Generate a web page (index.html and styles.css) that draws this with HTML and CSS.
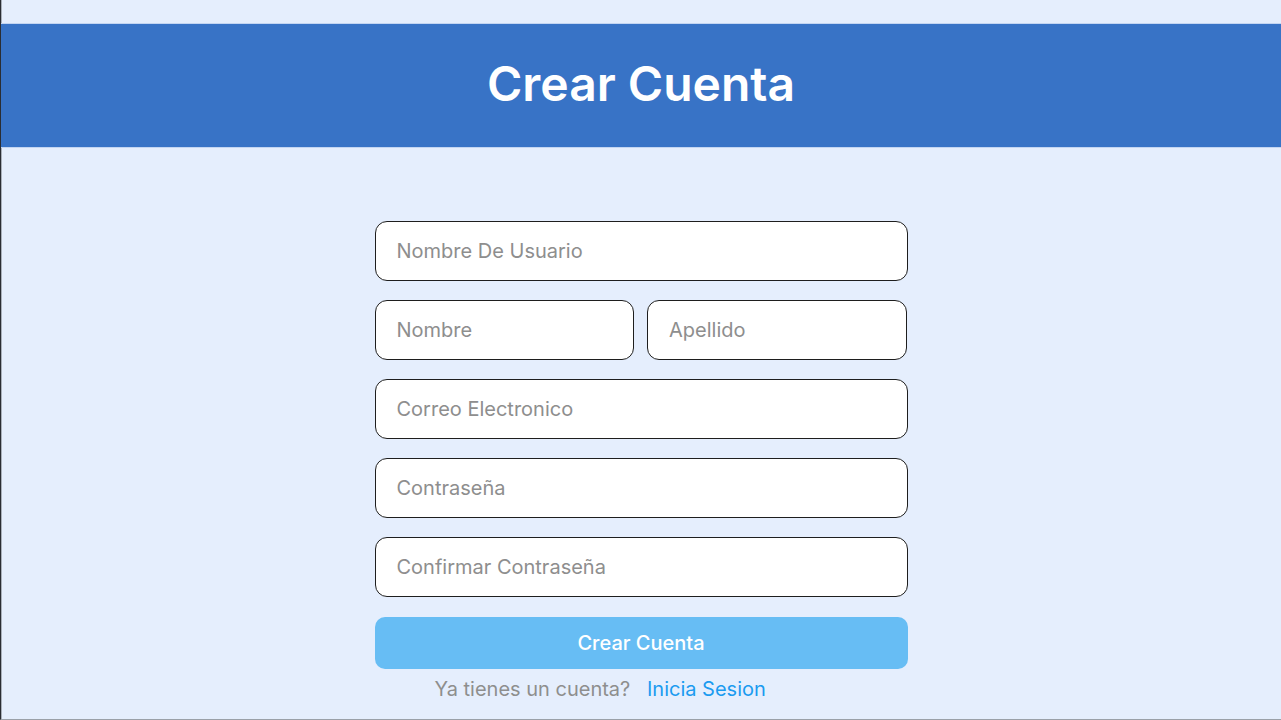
FILE: index.html
```html
<!DOCTYPE html>
<html lang="es">
<head>
<meta charset="utf-8">
<title>Crear Cuenta</title>
<link rel="stylesheet" href="styles.css">
</head>
<body>
<div class="frame">
  <header class="banner">
    <h1 class="title">Crear Cuenta</h1>
  </header>
  <main class="content">
    <form class="form">
      <input class="field" type="text" placeholder="Nombre De Usuario">
      <div class="row">
        <input class="field" type="text" placeholder="Nombre">
        <input class="field" type="text" placeholder="Apellido">
      </div>
      <input class="field" type="email" placeholder="Correo Electronico">
      <input class="field" type="password" placeholder="Contraseña">
      <input class="field" type="password" placeholder="Confirmar Contraseña">
      <button class="submit" type="button">Crear Cuenta</button>
      <p class="login">Ya tienes un cuenta? <a class="login-link" href="#">Inicia Sesion</a></p>
    </form>
  </main>
</div>
</body>
</html>
```
FILE: styles.css
```css
* { box-sizing: border-box; }
html, body { margin: 0; padding: 0; }
body {
  background: #e5eefd;
  font-family: Inter, "Noto Sans", sans-serif;
  width: 1281px;
  height: 720px;
  overflow: hidden;
}
.frame {
  height: 720px;
  border-left: 1px solid #2a2d33;
  border-bottom: 1px solid #9aa0a8;
  box-shadow: inset 1px 0 0 #a9b0ba;
  padding-top: 23px;
}
.banner {
  background: #3873c6;
  border-top: 1px solid #c3d5f2;
  border-bottom: 1px solid #c3d5f2;
  height: 125px;
  padding-bottom: 4px;
  display: flex;
  align-items: center;
  justify-content: center;
}
.title {
  margin: 0;
  color: #fff;
  font-size: 48px;
  font-weight: 600;
}
.content {
  display: flex;
  justify-content: center;
  padding-top: 73px;
}
.form {
  width: 533px;
  display: flex;
  flex-direction: column;
  gap: 19px;
}
.row {
  display: flex;
  gap: 13px;
  padding-right: 1px;
}
.row .field { flex: 1; min-width: 0; }
.field {
  height: 60px;
  width: 100%;
  border: 1.5px solid #1e1e1e;
  border-radius: 12px;
  background: #fff;
  padding: 0 21px;
  font-family: Inter, "Noto Sans", sans-serif;
  font-size: 20px;
  color: #222;
  outline: none;
}
.field::placeholder { color: #8e8e8e; }
.submit {
  margin-top: 1px;
  height: 52px;
  border: none;
  border-radius: 10px;
  background: #67bdf4;
  color: #fff;
  font-family: Inter, "Noto Sans", sans-serif;
  font-size: 20px;
  font-weight: 500;
}
.login {
  margin: -11px 0 0;
  padding-left: 60px;
  text-align: left;
  font-size: 20px;
  color: #8e8e8e;
}
.login-link {
  color: #1b9bf0;
  text-decoration: none;
  margin-left: 11px;
}
```
